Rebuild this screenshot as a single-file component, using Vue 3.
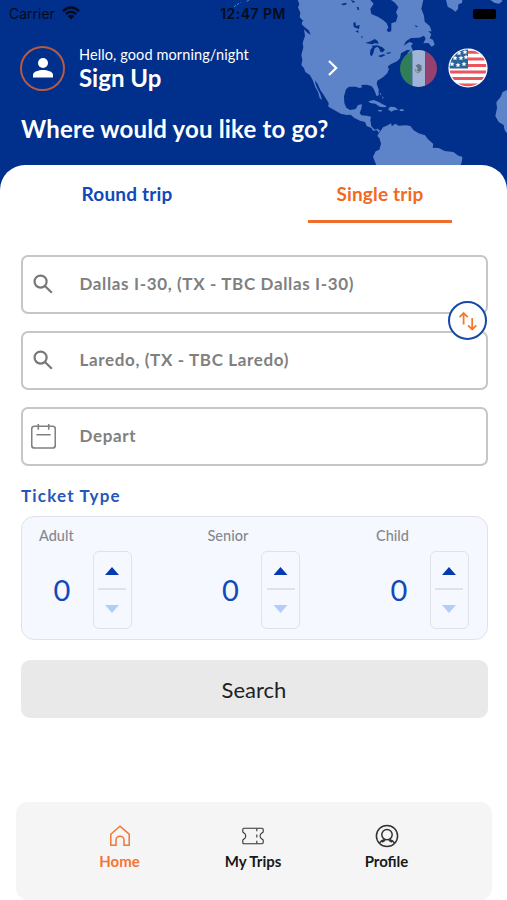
<template>
  <div class="screen">
    <header class="hero">
      <svg class="map" viewBox="0 0 771 510" aria-hidden="true">
        <g class="land">
          <path d="M143 0L148 12 144 22 151 38 149 52 157 60 155 73 166 83 176 91 182 104 173 99 162 88 165 108 158 128 160 142 154 165 157 181 154 195 162 205 166 216 180 226 188 240 196 262 204 276 209 294 216 300 211 282 202 265 197 253 195 241 203 252 211 270 221 285 231 301 236 309 235 320 254 331 272 341 290 345 302 344 313 354 330 362 345 366 350 378 364 384 370 393 380 390 387 399 390 392 383 386 374 389 364 379 361 360 363 350 350 347 334 346 329 339 334 326 336 313 324 315 317 327 300 330 289 323 283 309 282 289 288 268 297 260 317 260 328 264 337 262 333 255 350 254 364 258 371 266 376 278 380 289 386 286 386 268 380 252 382 242 399 232 412 220 417 207 413 200 422 193 441 184 450 175 453 160 471 150 481 151 472 160 478 169 493 158 488 149 483 138 489 130 478 126 461 137 468 124 483 114 508 113 522 107 527 116 520 130 535 129 545 140 554 134 549 119 539 115 544 103 535 94 545 94 539 78 524 65 522 47 514 26 520 0Z" />
          <path d="M382 407L391 394 399 382 410 377 424 370 425 379 436 371 446 377 468 376 481 378 491 391 506 400 525 406 534 418 550 432 548 443 566 444 584 453 610 456 625 467 637 470 636 482 628 510 384 510 376 488 369 470 377 454 388 449 393 431 389 416Z" />
          <path d="M355 304L371 300 385 305 398 313 411 319 403 322 389 320 376 311 361 309ZM414 328L420 320 434 321 445 329 432 331 424 335ZM449 328H461V333H449ZM385 329L397 331 393 335 384 333ZM390 278L395 282 391 286ZM397 288L401 293 398 298Z" />
          <path d="M588 0L593 20 607 28 616 35 624 27 625 13 636 9 637 0ZM721 0L733 8 747 11 757 4 756 0ZM771 270L758 276 752 290 739 307 741 324 736 348 746 366 761 375 764 391 771 400Z" />
        </g>
        <g class="water">
          <path d="M361 0L371 11 361 27 364 42 385 51 400 61 410 70 415 82 410 91 416 97 424 93 424 70 438 65 443 48 438 37 445 22 435 8 423 0Z" />
          <path d="M346 129L362 124 374 117 383 123 386 131 374 130 366 133ZM360 164L361 150 368 141 365 137 382 136 397 142 405 149 398 157 391 155 387 145 382 140 374 145 370 160 365 169ZM384 168L399 163 407 165 393 172ZM406 159L424 156 417 162ZM310 69L316 65 318 78 329 75 327 87 318 84 311 80ZM316 94L324 91 327 99ZM335 107L339 112 334 114ZM273 12L290 8 288 14 279 16ZM302 0L315 4 310 9ZM320 22L325 20 328 31 323 29ZM149 60L160 60 155 68ZM493 76L504 79 499 82Z" />
        </g>
        <path class="trail" d="M-48 20L-28 7M-10 4L-1 0" />
      </svg>

      <div class="status">
        <div class="carrier">
          <span>Carrier</span>
          <svg class="wifi" viewBox="0 0 18 14">
            <path d="M1 5.2Q9-2.2 17 5.2M3.8 8Q9 3.4 14.2 8" />
            <path class="wifi-dot" d="M5.8 10Q9 7.4 12.2 10L9 13.4Z" />
          </svg>
        </div>
        <span class="time">12:47 PM</span>
        <span class="battery"></span>
      </div>

      <div class="account">
        <div class="avatar">
          <svg viewBox="0 0 22 22">
            <circle cx="11" cy="6" r="5" />
            <path d="M1 20.5V17.8C1 14.5 7 13 11 13S21 14.5 21 17.8V20.5Z" />
          </svg>
        </div>
        <div class="greeting">
          <span class="hello">Hello, good morning/night</span>
          <span class="signup">Sign Up</span>
        </div>
        <svg class="chevron" viewBox="0 0 12 18"><path d="M2 2L9.2 9 2 16" /></svg>
        <svg class="flag mexico" viewBox="0 0 36 36">
          <clipPath id="mx"><circle cx="18" cy="18" r="18" /></clipPath>
          <g clip-path="url(#mx)">
            <path fill="#317c59" d="M0 0H12V36H0Z" />
            <path fill="#a0b4d8" d="M12 0H24.5V36H12Z" />
            <path fill="#96416f" d="M24.5 0H36V36H24.5Z" />
            <path fill="#627282" d="M15 15L18 13.5 21 15 21 20 18.5 21.5 16 19.5 17.5 18Z" />
            <path fill="none" stroke="#71917f" d="M14.5 18Q15 22.5 19 22" />
          </g>
        </svg>
        <svg class="flag" viewBox="0 0 40 40">
          <clipPath id="us"><circle cx="20" cy="20" r="18.4" /></clipPath>
          <circle cx="20" cy="20" r="19.6" fill="#fff" />
          <g clip-path="url(#us)">
            <path stroke="#ec5560" stroke-width="3" d="M0 4.2H40M0 11H40M0 17.4H40M0 24H40M0 30.6H40M0 37H40" />
            <path fill="#286399" d="M0 0H20V20.5H0Z" />
            <path
              v-for="(s, i) in stars"
              :key="i"
              fill="#fff"
              d="M0-2.5L.8-.8 2.5-.7 1.2.5 1.6 2.3 0 1.3-1.6 2.3-1.2.5-2.5-.7-.8-.8Z"
              :transform="`translate(${s[0]} ${s[1]})`"
            />
          </g>
        </svg>
      </div>

      <h1>Where would you like to go?</h1>
    </header>

    <main class="sheet">
      <div class="tabs">
        <button
          v-for="t in tabs"
          :key="t"
          class="tab"
          :class="{ active: t === tab }"
          @click="tab = t"
        >{{ t }}</button>
      </div>

      <div class="fields">
        <div v-for="f in fields" :key="f.text" class="field">
          <svg v-if="f.icon === 'search'" class="field-icon" viewBox="0 0 24 24">
            <circle cx="9.2" cy="9.2" r="5.8" />
            <path d="M13.4 13.5L20 20" />
          </svg>
          <svg v-else class="field-icon calendar" viewBox="0 0 24 24">
            <rect x=".7" y="2.2" width="22.6" height="20.8" rx="2.5" />
            <path d="M7 0V5.4M17 0V5.4M5.2 10.4H18.8" />
          </svg>
          <span>{{ f.text }}</span>
        </div>
        <button class="swap" @click="swap">
          <svg viewBox="0 0 20 20">
            <path d="M5.6 13.5V2.5M1.5 6.2L5.6 2 9.7 6.2M14.2 7V18M10.1 14.3L14.2 18.5 18.3 14.3" />
          </svg>
        </button>
      </div>

      <h2>Ticket Type</h2>
      <div class="tickets">
        <div v-for="p in passengers" :key="p.label" class="passenger">
          <span class="label">{{ p.label }}</span>
          <div class="counter">
            <span class="count">{{ p.count }}</span>
            <div class="stepper">
              <button class="up" @click="p.count++"></button>
              <i></i>
              <button class="down" @click="p.count = Math.max(0, p.count - 1)"></button>
            </div>
          </div>
        </div>
      </div>

      <button class="search">Search</button>
    </main>

    <nav class="bottom">
      <a class="home">
        <svg viewBox="0 0 24 24">
          <path d="M2.8 10.2L12 2.2 21.2 10.2V21.3H16V16.2A4 4 0 0 0 8 16.2V21.3H2.8Z" />
        </svg>
        <span>Home</span>
      </a>
      <a class="trips">
        <svg viewBox="0 0 24 24">
          <path d="M3 4.2H21Q22.2 4.2 22.2 5.4V8L19.6 10.2Q18.6 12 19.6 13.8L22.2 16V18.6Q22.2 19.8 21 19.8H3Q1.8 19.8 1.8 18.6V16L4.2 13.8Q5.2 12 4.2 10.2L1.8 8V5.4Q1.8 4.2 3 4.2Z" />
          <path d="M15.8 4.5V7.2M15.8 10.5V13.5M15.8 16.8V19.5" />
        </svg>
        <span>My Trips</span>
      </a>
      <a class="profile">
        <svg viewBox="0 0 24 24">
          <circle cx="12" cy="12" r="10.6" />
          <circle cx="12" cy="10.6" r="5.2" />
          <path d="M4.3 19.3Q6 16.5 9.6 15.6M14.4 15.6Q18 16.5 19.7 19.3M9.6 15.2V16.5L7 18M14.4 15.2V16.5L17 18" />
        </svg>
        <span>Profile</span>
      </a>
    </nav>
  </div>
</template>

<script setup>
import { ref } from 'vue'

const tabs = ['Round trip', 'Single trip']
const tab = ref('Single trip')

const fields = ref([
  { icon: 'search', text: 'Dallas I-30, (TX - TBC Dallas I-30)' },
  { icon: 'search', text: 'Laredo, (TX - TBC Laredo)' },
  { icon: 'calendar', text: 'Depart' },
])

const passengers = ref([
  { label: 'Adult', count: 0 },
  { label: 'Senior', count: 0 },
  { label: 'Child', count: 0 },
])

const stars = [[11, 5], [17, 4], [7, 10], [13, 10], [18, 9], [4, 16], [10, 17], [16, 16]]

function swap() {
  const [from, to, ...rest] = fields.value
  fields.value = [to, from, ...rest]
}
</script>

<style>
body { margin: 0; background: #fff; }
</style>

<style scoped>
.screen {
  position: relative; display: flex; flex-direction: column;
  width: 507px; height: 900px; overflow: hidden; box-sizing: border-box;
  font-family: Lato, "Liberation Sans", sans-serif; background: #fff;
}
button { border: 0; padding: 0; background: none; font: inherit; cursor: pointer; }
svg { display: block; flex: none; }

.hero { position: relative; height: 190px; flex: none; background: #002f8c; color: #fff; }
.map { position: absolute; left: 250px; top: 0; width: 257px; height: 170px; overflow: visible; }
.land { fill: #5d83c8; }
.water { fill: #002f8c; }
.trail { stroke: #5d83c8; stroke-width: 3; stroke-dasharray: 7 4; }

.status {
  position: relative; display: grid; grid-template-columns: 1fr auto 1fr; align-items: center;
  height: 27px; padding: 0 10px 0 9px; color: #050b1c;
  font: 14px/27px Inter, sans-serif;
}
.carrier { display: flex; align-items: center; gap: 7px; }
.wifi { width: 18px; height: 14px; margin-top: -2px; fill: none; stroke: #050b1c; stroke-width: 2.4; }
.wifi-dot { fill: #050b1c; stroke: none; }
.time { font-weight: 600; letter-spacing: .45px; }
.battery { justify-self: end; width: 23px; height: 10px; margin-right: 1px; border-radius: 2px; background: #000; }

.account { position: relative; display: flex; align-items: center; height: 46px; margin-top: 18px; padding: 0 19px 0 20px; }
.avatar {
  display: flex; align-items: center; justify-content: center; box-sizing: border-box;
  width: 45px; height: 45px; border: 2px solid #b75a42; border-radius: 50%;
}
.avatar svg { width: 22px; height: 22px; fill: #fff; }
.greeting { display: flex; flex-direction: column; width: 248px; margin-left: 14px; white-space: nowrap; }
.hello { padding-top: 1px; font-size: 14.5px; line-height: 18px; letter-spacing: .1px; }
.signup { font-size: 24px; line-height: 28px; font-weight: 700; }
.chevron { width: 12px; height: 18px; fill: none; stroke: #fff; stroke-width: 2.2; }
.flag { width: 40px; height: 40px; }
.mexico { width: 37px; height: 37px; margin: 0 11px 0 auto; }

h1 { position: relative; margin: 21px 0 0 21px; font-size: 24px; line-height: 34px; font-weight: 700; letter-spacing: .18px; white-space: nowrap; }

.sheet {
  position: relative; flex: none; height: 637px; margin-top: -25px; padding: 0 19.5px 0 20.5px;
  border-radius: 25px 25px 0 0; background: #fff; box-sizing: border-box;
}
.tabs { display: flex; justify-content: space-between; padding: 0 35.5px 0 34.5px; }
.tab {
  width: 144px; height: 58px; padding-top: 2px; border-bottom: 3px solid transparent; box-sizing: border-box;
  font-size: 19px; font-weight: 700; letter-spacing: .18px; color: #1149b8;
}
.tab.active { border-color: #ee6f2d; color: #f26a1f; }

.fields { position: relative; display: flex; flex-direction: column; gap: 17px; margin-top: 32px; }
.field {
  display: flex; align-items: center; gap: 24px; height: 59px; padding: 0 0 1px 8px;
  border: 2px solid #c6c6c6; border-radius: 7px; box-sizing: border-box;
  font-size: 17px; font-weight: 700; letter-spacing: .64px; color: #808080;
}
.field span { padding-bottom: 1px; }
.field-icon { width: 25px; height: 25px; fill: none; stroke: #777; stroke-width: 2.1; }
.calendar { stroke-width: 1.5; stroke: #808080; }
.swap {
  position: absolute; right: .5px; top: 46px; display: flex; align-items: center; justify-content: center;
  width: 39px; height: 39px; border: 2.5px solid #1548a8; border-radius: 50%; background: #fff; box-sizing: border-box;
}
.swap svg { width: 20px; height: 20px; fill: none; stroke: #f47a30; stroke-width: 1.8; }

h2 { margin: 19px 0 9px .5px; font-size: 17px; line-height: 22px; font-weight: 700; letter-spacing: 1.2px; color: #2458b8; }
.tickets {
  display: grid; grid-template-columns: repeat(3, 168.5px); height: 124px; padding: 9px 0 0 17.5px;
  border: 1.5px solid #dfe2e7; border-radius: 13px; background: #f5f8ff; box-sizing: border-box; overflow: hidden;
}
.label { display: block; height: 19px; font-size: 14.5px; line-height: 19px; font-weight: 500; color: #85888e; }
.counter { display: flex; align-items: center; margin-top: 6px; }
.count { width: 39px; padding-left: 14.5px; font-size: 29px; line-height: 36px; color: #1149b8; }
.stepper {
  display: flex; flex-direction: column; align-items: center; justify-content: space-between;
  width: 39px; height: 78px; padding: 15px 0; border: 1.5px solid #dfe2e8; border-radius: 6px; box-sizing: border-box;
}
.stepper i { width: 28px; height: 2px; margin-bottom: 2px; background: #dfe2e7; }
.up, .down { width: 14px; height: 8px; background: #063bb0; clip-path: polygon(50% 0, 100% 100%, 0 100%); }
.down { background: #b3cdfa; clip-path: polygon(0 0, 100% 0, 50% 100%); }

.search { display: block; width: 100%; height: 58px; margin-top: 20px; border-radius: 9px; background: #e9e9e9; font-size: 22px; color: #222; }

.bottom {
  display: flex; justify-content: center; flex: none; height: 98px; margin: 0 15px 0 16px; padding: 22px 2px 0 0;
  border-radius: 12px; background: #f5f5f5; box-sizing: border-box;
}
.bottom a {
  display: flex; flex-direction: column; align-items: center; gap: 2px; width: 133.5px;
  font-size: 15px; line-height: 22px; font-weight: 700; color: #191919;
}
.bottom svg { width: 24px; height: 24px; fill: none; stroke: #333; stroke-width: 1.5; }
.bottom .home { color: #f37435; }
.bottom .home svg { stroke: #f37435; }
.bottom .trips svg { stroke-width: 1.1; }
</style>
